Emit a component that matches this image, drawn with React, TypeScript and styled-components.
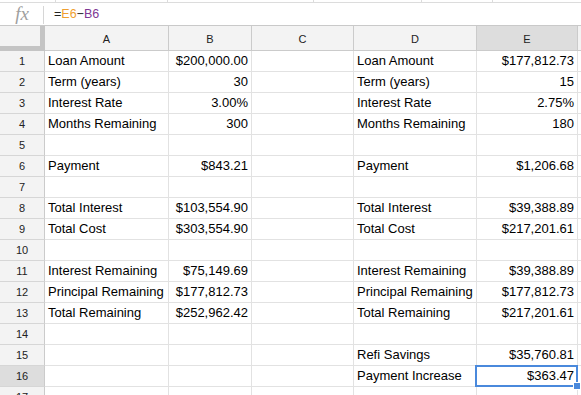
import React from "react";
import styled, { createGlobalStyle } from "styled-components";

type Row = { a?: string; b?: string; d?: string; e?: string };

const rows: Row[] = [
  { a: "Loan Amount", b: "$200,000.00", d: "Loan Amount", e: "$177,812.73" },
  { a: "Term (years)", b: "30", d: "Term (years)", e: "15" },
  { a: "Interest Rate", b: "3.00%", d: "Interest Rate", e: "2.75%" },
  { a: "Months Remaining", b: "300", d: "Months Remaining", e: "180" },
  {},
  { a: "Payment", b: "$843.21", d: "Payment", e: "$1,206.68" },
  {},
  { a: "Total Interest", b: "$103,554.90", d: "Total Interest", e: "$39,388.89" },
  { a: "Total Cost", b: "$303,554.90", d: "Total Cost", e: "$217,201.61" },
  {},
  { a: "Interest Remaining", b: "$75,149.69", d: "Interest Remaining", e: "$39,388.89" },
  { a: "Principal Remaining", b: "$177,812.73", d: "Principal Remaining", e: "$177,812.73" },
  { a: "Total Remaining", b: "$252,962.42", d: "Total Remaining", e: "$217,201.61" },
  {},
  { d: "Refi Savings", e: "$35,760.81" },
  { d: "Payment Increase", e: "$363.47" },
  {},
];

const columns = ["A", "B", "C", "D", "E", ""];
const SELECTED_ROW = 16;
const SELECTED_COL = "E";

const GlobalStyle = createGlobalStyle`
  html, body {
    margin: 0;
    padding: 0;
    background: #fff;
    overflow: hidden;
  }
  body {
    font-family: "Liberation Sans", Arial, sans-serif;
    color: #000;
  }
`;

const Page = styled.div`
  width: 581px;
  height: 395px;
  overflow: hidden;
  display: flex;
  flex-direction: column;
  & > * {
    flex: none;
  }
`;

const TopStrip = styled.div`
  display: flex;
  height: 2px;
  border-bottom: 1px solid #dcdcdc;
`;

const Tick = styled.div<{ $w: number }>`
  width: ${({ $w }) => $w}px;
  flex: none;
  border-right: 1px solid #dcdcdc;
`;

const FormulaBar = styled.div`
  display: flex;
  align-items: center;
  height: 22px;
  border-bottom: 1px solid #c9c9c9;
`;

const FxLabel = styled.div`
  width: 44px;
  height: 22px;
  flex: none;
  display: flex;
  justify-content: center;
  align-items: center;
  position: relative;
  font-family: "Liberation Serif", "Times New Roman", serif;
  font-style: italic;
  font-size: 19px;
  line-height: 22px;
  color: #a0a0a0;
  &::after {
    content: "";
    position: absolute;
    right: 0;
    top: 3px;
    bottom: 1px;
    width: 1px;
    background: #d6d6d6;
  }
`;

const FormulaText = styled.div`
  padding-left: 10px;
  font-size: 12.5px;
  line-height: 22px;
  color: #222;
`;

const Ref = styled.span<{ $color: string }>`
  color: ${({ $color }) => $color};
`;

const Grid = styled.div`
  display: grid;
  grid-template-columns: 45px 124px 83px 102px 123px 101px 1fr;
  grid-template-rows: 25px;
  grid-auto-rows: 21px;
`;

const HeaderBase = styled.div<{ $active?: boolean }>`
  box-sizing: border-box;
  background: ${({ $active }) => ($active ? "#dddddd" : "#f3f3f3")};
  border-right: 1px solid #cbcbcb;
  border-bottom: 1px solid #cbcbcb;
  font-size: 11px;
  color: #222;
  display: flex;
  align-items: center;
  justify-content: center;
`;

const Corner = styled(HeaderBase)`
  border-right: 5px solid #c4c4c4;
  border-bottom: 5px solid #c4c4c4;
`;

const ColHeader = styled(HeaderBase)`
  padding-top: 1px;
`;

const RowHeader = styled(HeaderBase)`
  border-bottom-color: #d6d6d6;
`;

const Cell = styled.div<{ $right?: boolean; $selected?: boolean }>`
  box-sizing: border-box;
  position: ${({ $selected }) => ($selected ? "relative" : "static")};
  z-index: ${({ $selected }) => ($selected ? 2 : "auto")};
  border-right: 1px solid #e2e2e2;
  border-bottom: 1px solid #e2e2e2;
  padding: 0 3px;
  font-size: 13px;
  line-height: 20px;
  white-space: nowrap;
  text-align: ${({ $right }) => ($right ? "right" : "left")};
`;

const SelectionBox = styled.div`
  position: absolute;
  top: -1px;
  left: -2px;
  right: -1px;
  bottom: -1px;
  border: 2px solid #4a89dc;
  pointer-events: none;
`;

const FillHandle = styled.div`
  position: absolute;
  right: -3px;
  bottom: -3px;
  width: 6px;
  height: 6px;
  background: #4a89dc;
  outline: 1px solid #fff;
`;

const isNumeric = (v?: string) => !!v && /^[$\d]/.test(v);

export default function App() {
  return (
    <Page>
      <GlobalStyle />
      <TopStrip>
        <Tick $w={55} />
        <Tick $w={111} />
        <Tick $w={145} />
        <Tick $w={107} />
        <Tick $w={70} />
      </TopStrip>
      <FormulaBar>
        <FxLabel>fx</FxLabel>
        <FormulaText>
          =<Ref $color="#f0a030">E6</Ref>−<Ref $color="#7e3794">B6</Ref>
        </FormulaText>
      </FormulaBar>
      <Grid>
        <Corner />
        {columns.map((c, i) => (
          <ColHeader key={i} $active={c === SELECTED_COL}>
            {c}
          </ColHeader>
        ))}
        {rows.map((r, i) => {
          const n = i + 1;
          const values = [r.a, r.b, undefined, r.d, r.e, undefined];
          return (
            <React.Fragment key={n}>
              <RowHeader $active={n === SELECTED_ROW}>{n}</RowHeader>
              {values.map((v, j) => {
                const selected = n === SELECTED_ROW && columns[j] === SELECTED_COL;
                return (
                  <Cell key={j} $right={isNumeric(v)} $selected={selected}>
                    {v}
                    {selected && (
                      <>
                        <SelectionBox />
                        <FillHandle />
                      </>
                    )}
                  </Cell>
                );
              })}
            </React.Fragment>
          );
        })}
      </Grid>
    </Page>
  );
}
